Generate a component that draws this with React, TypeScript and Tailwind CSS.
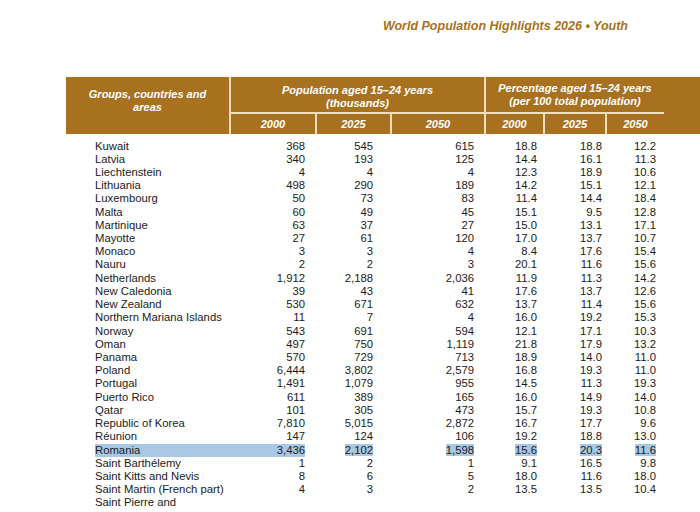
import React from "react";

type Row = [string, string, string, string, string, string, string];

const rows: Row[] = [
  ["Kuwait", "368", "545", "615", "18.8", "18.8", "12.2"],
  ["Latvia", "340", "193", "125", "14.4", "16.1", "11.3"],
  ["Liechtenstein", "4", "4", "4", "12.3", "18.9", "10.6"],
  ["Lithuania", "498", "290", "189", "14.2", "15.1", "12.1"],
  ["Luxembourg", "50", "73", "83", "11.4", "14.4", "18.4"],
  ["Malta", "60", "49", "45", "15.1", "9.5", "12.8"],
  ["Martinique", "63", "37", "27", "15.0", "13.1", "17.1"],
  ["Mayotte", "27", "61", "120", "17.0", "13.7", "10.7"],
  ["Monaco", "3", "3", "4", "8.4", "17.6", "15.4"],
  ["Nauru", "2", "2", "3", "20.1", "11.6", "15.6"],
  ["Netherlands", "1,912", "2,188", "2,036", "11.9", "11.3", "14.2"],
  ["New Caledonia", "39", "43", "41", "17.6", "13.7", "12.6"],
  ["New Zealand", "530", "671", "632", "13.7", "11.4", "15.6"],
  ["Northern Mariana Islands", "11", "7", "4", "16.0", "19.2", "15.3"],
  ["Norway", "543", "691", "594", "12.1", "17.1", "10.3"],
  ["Oman", "497", "750", "1,119", "21.8", "17.9", "13.2"],
  ["Panama", "570", "729", "713", "18.9", "14.0", "11.0"],
  ["Poland", "6,444", "3,802", "2,579", "16.8", "19.3", "11.0"],
  ["Portugal", "1,491", "1,079", "955", "14.5", "11.3", "19.3"],
  ["Puerto Rico", "611", "389", "165", "16.0", "14.9", "14.0"],
  ["Qatar", "101", "305", "473", "15.7", "19.3", "10.8"],
  ["Republic of Korea", "7,810", "5,015", "2,872", "16.7", "17.7", "9.6"],
  ["Réunion", "147", "124", "106", "19.2", "18.8", "13.0"],
  ["Romania", "3,436", "2,102", "1,598", "15.6", "20.3", "11.6"],
  ["Saint Barthélemy", "1", "2", "1", "9.1", "16.5", "9.8"],
  ["Saint Kitts and Nevis", "8", "6", "5", "18.0", "11.6", "18.0"],
  ["Saint Martin (French part)", "4", "3", "2", "13.5", "13.5", "10.4"],
  ["Saint Pierre and", "", "", "", "", "", ""],
];

// right padding for each numeric column (cols 2-7)
const pads = ["pr-[10px]", "pr-[17px]", "pr-[10px]", "pr-[6px]", "pr-[3px]", "pr-[8px]"];

const gridCols = "grid grid-cols-[163px_86px_75px_94px_59px_62px_59px]";

function DataRow({ row, selected }: { row: Row; selected?: boolean }) {
  const [name, ...nums] = row;
  const hl = selected ? "bg-[#a9c8e3]" : "";
  return (
    <div className={`${gridCols} h-[13.22px] leading-[13.22px]`}>
      <div className={`ml-[29px] whitespace-nowrap ${hl}`}>{name}</div>
      {nums.map((n, i) =>
        i === 0 ? (
          <div key={i} className={`text-right ${selected ? "mr-[10px] " + hl : pads[0]}`}>
            {n}
          </div>
        ) : (
          <div key={i} className={`text-right ${pads[i]}`}>
            <span className={hl}>{n}</span>
          </div>
        )
      )}
    </div>
  );
}

export default function App() {
  const line = "border-[#f1dfbd]";
  return (
    <div className="w-[700px] h-[512px] overflow-hidden bg-white font-['Liberation_Sans',Arial,sans-serif]">
      <div className="flex justify-end pr-[72px] pt-[18px]">
        <h1 className="text-[12.5px] leading-[16px] font-bold italic text-[#a9711c]">
          World Population Highlights 2026 • Youth
        </h1>
      </div>

      <div className="ml-[66px] mt-[43px]">
        {/* column headings */}
        <div className={`${gridCols} grid-rows-[35px_22px] bg-[#a8711f] text-white text-[11px] font-bold italic leading-[13px]`}>
          <div className="row-span-2 flex items-center justify-center text-center pb-[10px] px-2">
            Groups, countries and
            <br />
            areas
          </div>
          <div className={`col-span-3 border-l-2 ${line} flex items-center justify-center text-center pt-[4px]`}>
            Population aged 15–24 years
            <br />
            (thousands)
          </div>
          <div className={`col-span-3 border-l-2 ${line} flex items-center justify-center text-center pt-[1px]`}>
            Percentage aged 15–24 years
            <br />
            (per 100 total population)
          </div>
          {["2000", "2025", "2050", "2000", "2025", "2050"].map((y, i) => (
            <div key={i} className={`border-l-2 border-t-2 ${line} flex items-center justify-center`}>
              {y}
            </div>
          ))}
        </div>

        {/* body */}
        <div className="pt-[5.5px] text-[11.3px] text-[#1b1b1b]">
          {rows.map((r) => (
            <DataRow key={r[0]} row={r} selected={r[0] === "Romania"} />
          ))}
        </div>
      </div>
    </div>
  );
}
